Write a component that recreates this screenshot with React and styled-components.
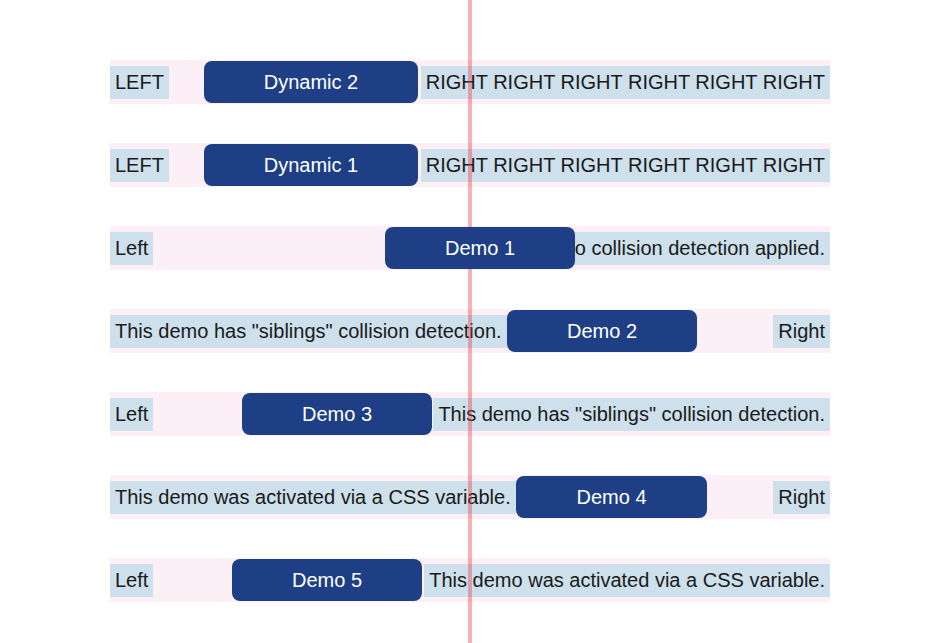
import React from "react";
import styled, { createGlobalStyle } from "styled-components";

const rows = [
  { left: "LEFT", right: "RIGHT RIGHT RIGHT RIGHT RIGHT RIGHT", label: "Dynamic 2", x: 94, w: 214 },
  { left: "LEFT", right: "RIGHT RIGHT RIGHT RIGHT RIGHT RIGHT", label: "Dynamic 1", x: 94, w: 214 },
  { left: "Left", right: "This demo has no collision detection applied.", label: "Demo 1", x: 275, w: 190 },
  { left: 'This demo has "siblings" collision detection.', right: "Right", label: "Demo 2", x: 397, w: 190 },
  { left: "Left", right: 'This demo has "siblings" collision detection.', label: "Demo 3", x: 132, w: 190 },
  { left: "This demo was activated via a CSS variable.", right: "Right", label: "Demo 4", x: 406, w: 191 },
  { left: "Left", right: "This demo was activated via a CSS variable.", label: "Demo 5", x: 122, w: 190 },
];

export default function App() {
  return (
    <Page>
      <GlobalStyle />
      <Guide />
      <List>
        {rows.map((row) => (
          <Row key={row.label}>
            <Label>{row.left}</Label>
            <Label>{row.right}</Label>
            <Anchor x={row.x} w={row.w}>{row.label}</Anchor>
          </Row>
        ))}
      </List>
    </Page>
  );
}

const GlobalStyle = createGlobalStyle`
  body {
    margin: 0;
    background: #ffffff;
    font-family: "Liberation Sans", Arial, sans-serif;
    color: #1a1a1a;
  }
`;

const Page = styled.div`
  position: relative;
  min-height: 643px;
  padding: 60px 0 0 110px;
  box-sizing: border-box;
  overflow: hidden;
`;

// vertical guide line, sits over the rows but under the floating buttons
const Guide = styled.div`
  position: absolute;
  top: 0;
  bottom: 0;
  left: 468px;
  width: 4px;
  background: rgba(240, 40, 50, 0.36);
  z-index: 1;
`;

const List = styled.div`
  width: 720px;
  display: flex;
  flex-direction: column;
  gap: 39px;
`;

const Row = styled.div`
  position: relative;
  height: 44px;
  display: flex;
  align-items: center;
  justify-content: space-between;
  background: #fcf0f6;
`;

const Label = styled.span`
  padding: 5px 5px;
  font-size: 20px;
  line-height: 23px;
  background: #cde0ec;
  white-space: nowrap;
`;

const Anchor = styled.button`
  position: absolute;
  top: 1px;
  left: ${({ x }) => x}px;
  width: ${({ w }) => w}px;
  height: 42px;
  border: none;
  border-radius: 8px;
  background: #1e3f85;
  color: #ffffff;
  font-family: "Liberation Sans", Arial, sans-serif;
  font-size: 20px;
  z-index: 2;
  cursor: pointer;
`;
